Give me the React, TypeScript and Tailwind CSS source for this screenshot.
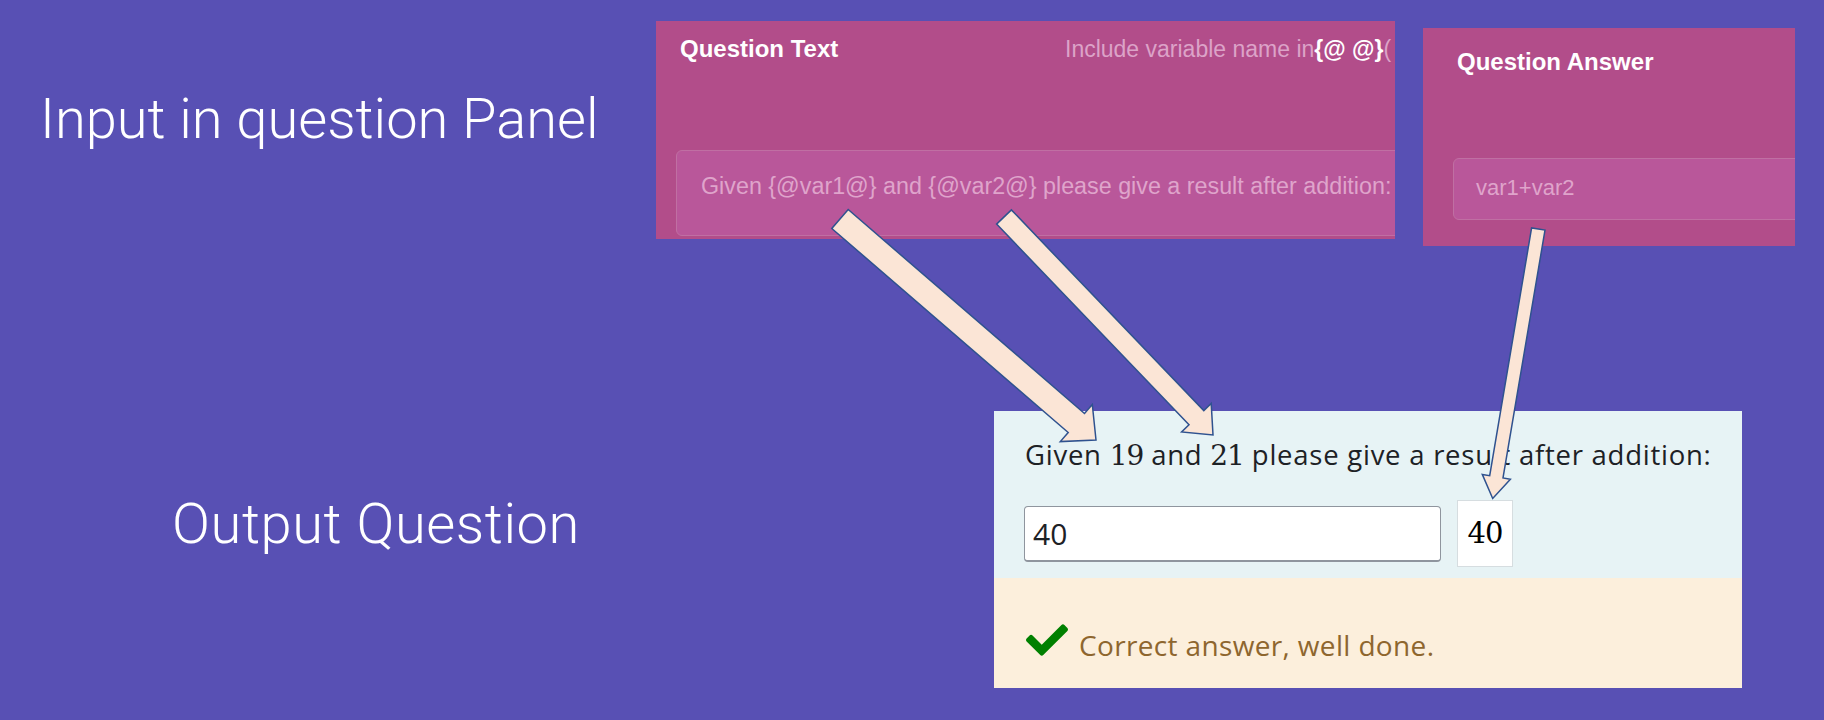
import React from "react";
import { FaCheck } from "react-icons/fa";

type Pt = [number, number];

function arrowPoints(t: Pt, p: Pt, w: number, hw: number, hl: number): string {
  const dx = p[0] - t[0];
  const dy = p[1] - t[1];
  const len = Math.hypot(dx, dy);
  const ux = dx / len;
  const uy = dy / len;
  const nx = -uy;
  const ny = ux;
  const bx = p[0] - ux * hl;
  const by = p[1] - uy * hl;
  const pts: Pt[] = [
    [t[0] + (nx * w) / 2, t[1] + (ny * w) / 2],
    [bx + (nx * w) / 2, by + (ny * w) / 2],
    [bx + (nx * hw) / 2, by + (ny * hw) / 2],
    [p[0], p[1]],
    [bx - (nx * hw) / 2, by - (ny * hw) / 2],
    [bx - (nx * w) / 2, by - (ny * w) / 2],
    [t[0] - (nx * w) / 2, t[1] - (ny * w) / 2],
  ];
  return pts.map((q) => `${q[0].toFixed(1)},${q[1].toFixed(1)}`).join(" ");
}

const arrows = [
  arrowPoints([840, 219], [1096, 440], 25, 49, 26),
  arrowPoints([1004, 217], [1213, 435], 20.5, 41, 24),
  arrowPoints([1538.3, 229], [1492.7, 498.5], 13.5, 28.5, 22),
];

export default function App() {
  return (
    <div className="relative w-[1824px] h-[720px] overflow-hidden bg-[#5850b4] font-['Liberation_Sans',Arial,sans-serif]">
      {/* top row */}
      <div className="flex items-start pt-[21px]">
        <div className="w-[656px] shrink-0 pl-[40px] pt-[70px] font-['Roboto',sans-serif] font-light text-[56px] leading-none text-white whitespace-nowrap tracking-[0px]">
          Input in question Panel
        </div>

        <div className="w-[739px] h-[218px] shrink-0 overflow-hidden bg-[#b24d8a] pl-[24px] pt-[16px]">
          <div className="flex h-[24px] items-baseline whitespace-nowrap leading-none">
            <div className="w-[385px] shrink-0 text-[24px] font-bold text-white">Question Text</div>
            <div className="text-[23px] text-[#dca3c8]">
              Include variable name in<span className="font-bold text-white">{"{@ @}"}</span>(
            </div>
          </div>
          <div className="mt-[89px] -ml-[4px] w-[800px] h-[86px] rounded-[6px] border border-[#c06fa3] bg-[#b9579a] pl-[24px] pt-[24px] text-[23.3px] leading-none text-[#dfa4cb] whitespace-nowrap">
            Given {"{@var1@}"} and {"{@var2@}"} please give a result after addition:
          </div>
        </div>

        <div className="ml-[28px] mt-[7px] w-[372px] h-[218px] shrink-0 overflow-hidden bg-[#b24d8a] pl-[34px] pt-[22px]">
          <div className="h-[24px] text-[24px] font-bold leading-none text-white whitespace-nowrap">Question Answer</div>
          <div className="mt-[84px] -ml-[4px] w-[400px] h-[62px] rounded-[6px] border border-[#c06fa3] bg-[#b9579a] pl-[22px] pt-[18px] text-[22px] leading-none text-[#dfa4cb] whitespace-nowrap">
            var1+var2
          </div>
        </div>
      </div>

      {/* bottom row */}
      <div className="mt-[165px] flex items-start">
        <div className="w-[994px] shrink-0 pl-[172px] pt-[85px] font-['Roboto',sans-serif] font-light text-[56px] leading-none text-white whitespace-nowrap tracking-[0.6px]">
          Output Question
        </div>

        <div className="w-[748px] shrink-0">
          <div className="h-[167px] bg-[#e7f3f5] pl-[31px] pt-[30px]">
            <div className="h-[28px] whitespace-nowrap font-['Open_Sans',sans-serif] text-[27.5px] leading-none text-[#1d2125] tracking-[0.75px]">
              Given <span className="font-['DejaVu_Serif',serif] text-[28px] font-medium leading-none tracking-[-1px]">19</span> and{" "}
              <span className="font-['DejaVu_Serif',serif] text-[28px] font-medium leading-none tracking-[-1px]">21</span> please give a result after addition:
            </div>
            <div className="mt-[31px] -ml-[1px] flex items-center gap-[16px]">
              <div className="w-[417px] h-[56px] rounded-[4px] border border-[#8f959e] border-b-2 bg-white pl-[8px] flex items-center font-['Open_Sans',sans-serif] text-[30px] text-[#1d2125]">
                40
              </div>
              <div className="w-[56px] h-[67px] border border-[#d6dde0] bg-white flex items-center justify-center font-['DejaVu_Serif',serif] text-[29px] tracking-[-1px] text-black">
                40
              </div>
            </div>
          </div>
          <div className="h-[110px] bg-[#fcefdc] flex items-start pl-[32px] pt-[41px]">
            <FaCheck className="w-[42px] h-[42px] text-[#008000] shrink-0" />
            <span className="ml-[11px] mt-[12px] whitespace-nowrap font-['Open_Sans',sans-serif] text-[28px] leading-none text-[#8e662e] tracking-[0.35px]">
              Correct answer, well done.
            </span>
          </div>
        </div>
      </div>

      {/* arrows overlay */}
      <svg className="pointer-events-none absolute inset-0" width="1824" height="720" viewBox="0 0 1824 720">
        {arrows.map((pts, i) => (
          <polygon key={i} points={pts} fill="#fbe5d6" stroke="#2f528f" strokeWidth="1.5" strokeLinejoin="miter" />
        ))}
      </svg>
    </div>
  );
}
